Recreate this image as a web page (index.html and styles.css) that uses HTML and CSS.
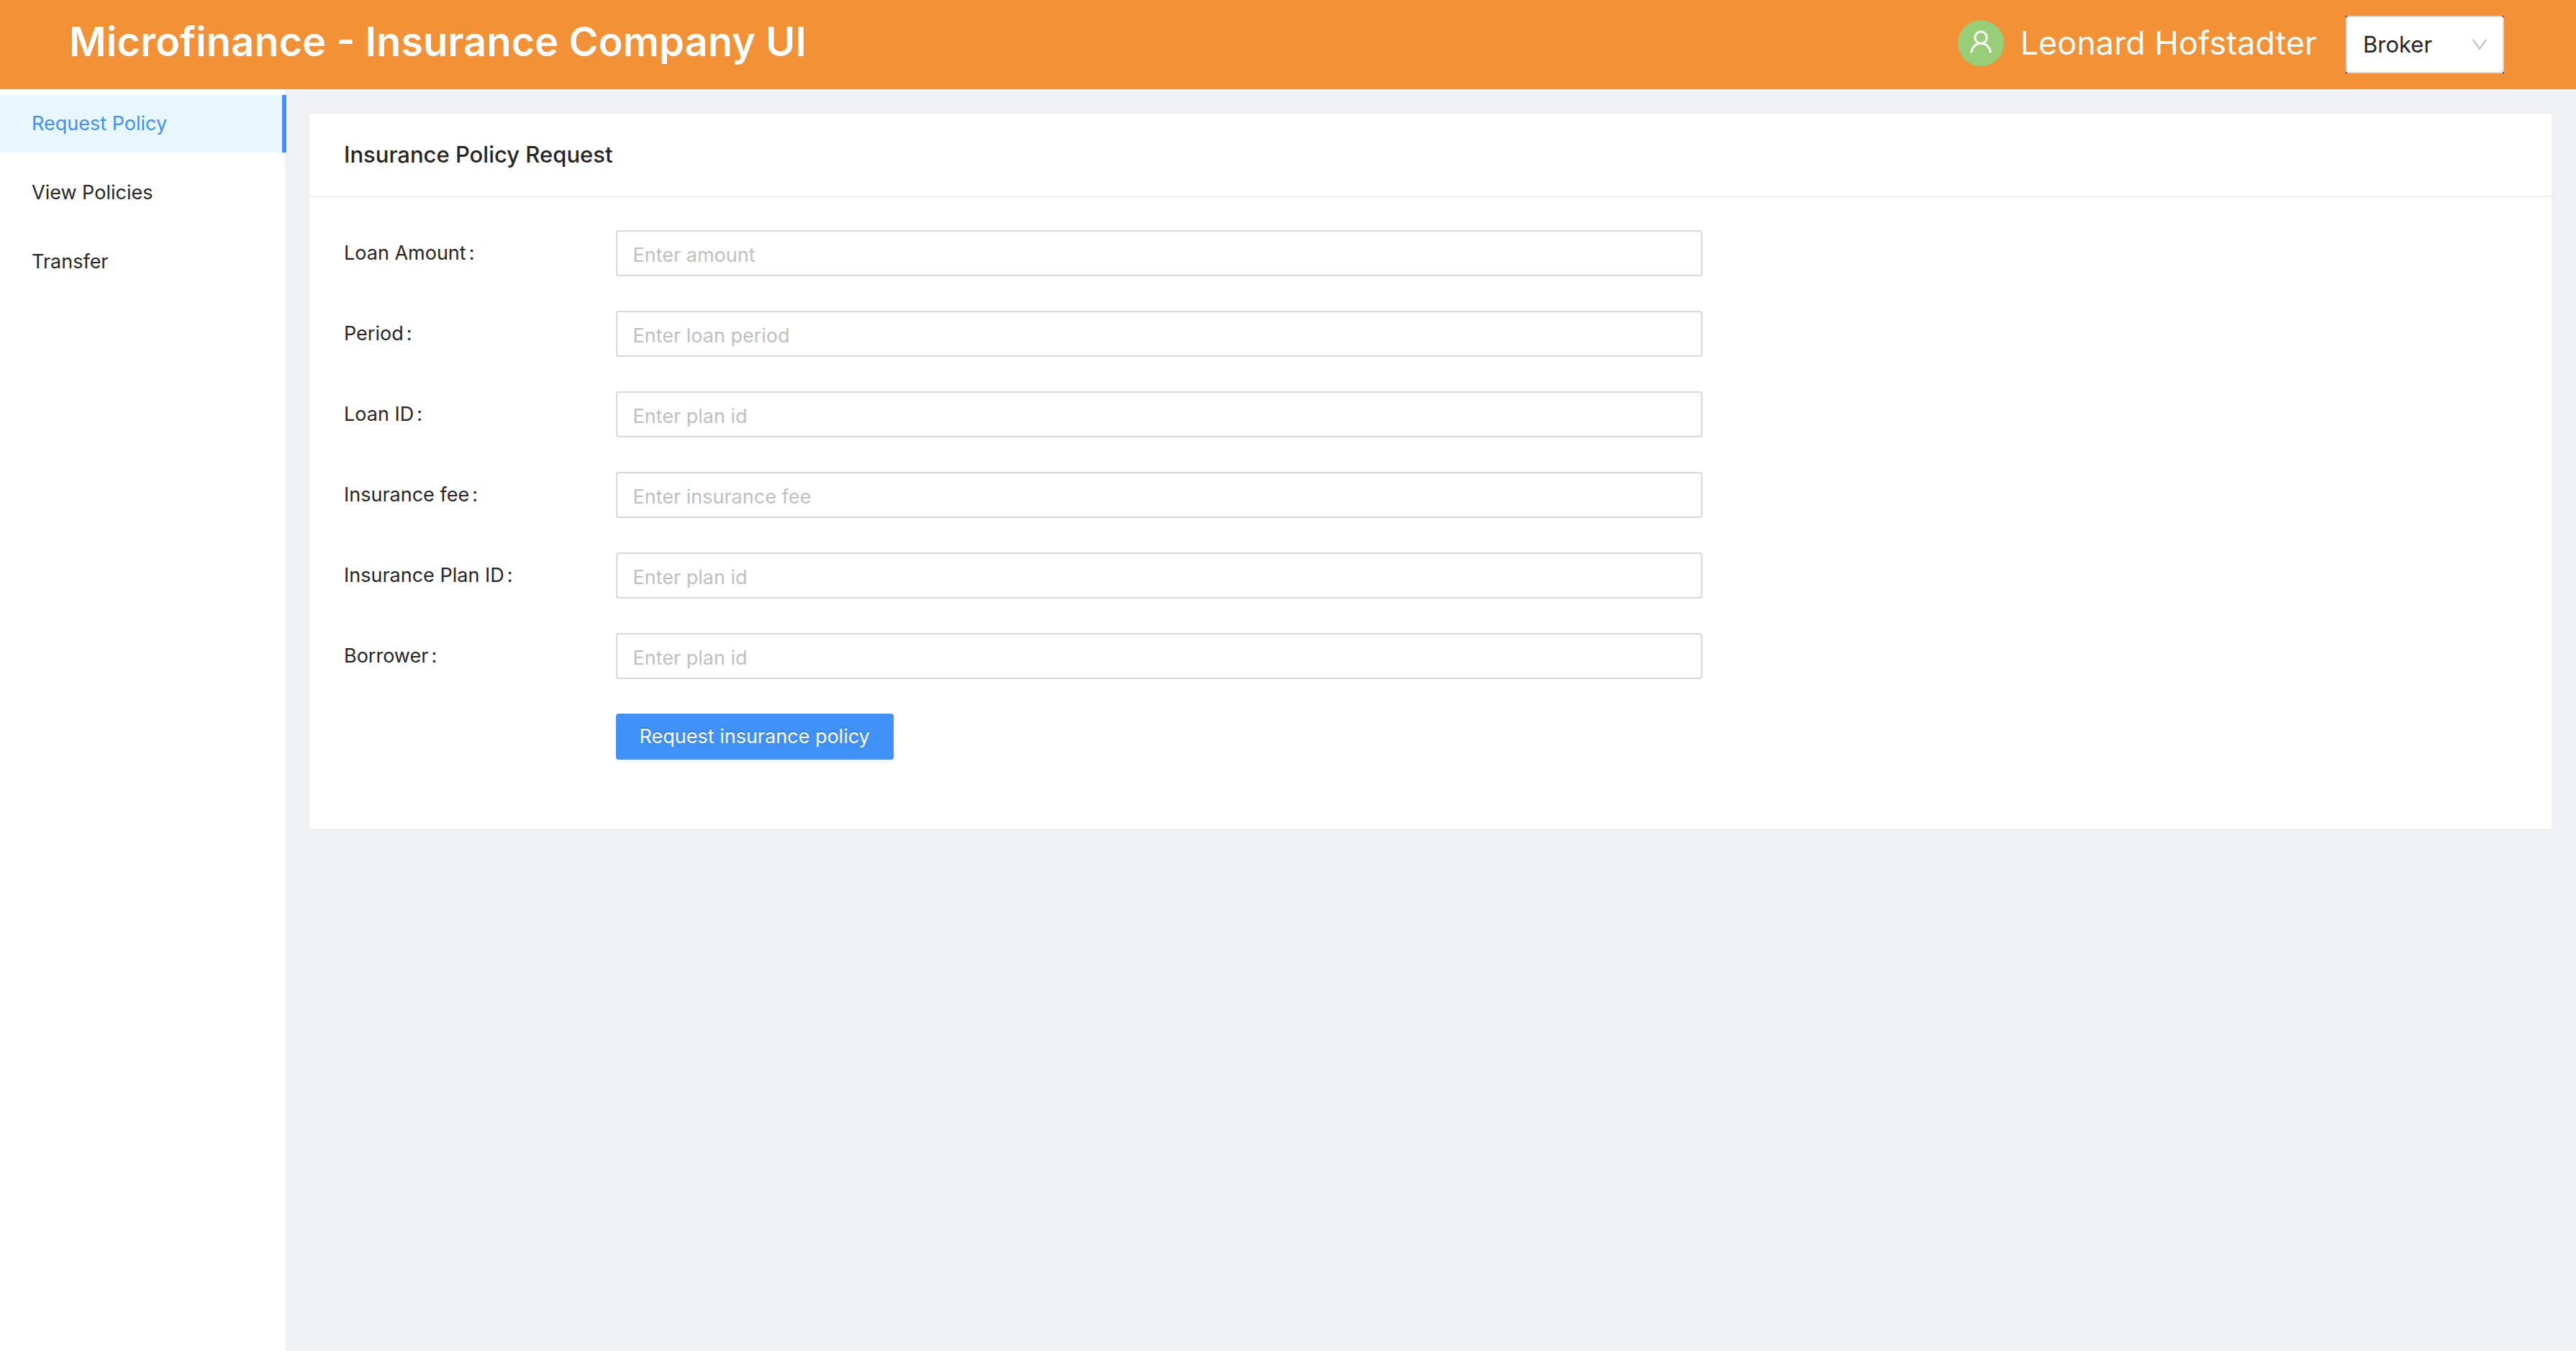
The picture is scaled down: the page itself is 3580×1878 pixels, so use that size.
FILE: index.html
```html
<!DOCTYPE html>
<html lang="en">
<head>
  <meta charset="utf-8">
  <meta name="viewport" content="width=device-width, initial-scale=1">
  <title>Microfinance - Insurance Company UI</title>
  <link rel="stylesheet" href="styles.css">
</head>
<body>
  <header class="header">
    <h1 class="header-title">Microfinance - Insurance Company UI</h1>
    <div class="account">
      <span class="avatar">
        <svg class="avatar-icon" viewBox="0 0 1024 1024" aria-hidden="true"><path d="M858.5 763.6a374 374 0 0 0-80.6-119.5 375.63 375.63 0 0 0-119.5-80.6c-.4-.2-.8-.3-1.2-.5C719.5 518 760 444.7 760 362c0-137-111-248-248-248S264 225 264 362c0 82.7 40.5 156 102.8 201.1-.4.2-.8.3-1.2.5-44.8 18.9-85 46-119.5 80.6a375.63 375.63 0 0 0-80.6 119.5A371.7 371.7 0 0 0 136 901.8a8 8 0 0 0 8 8.2h60c4.4 0 7.9-3.5 8-7.8 2-77.2 33-149.5 87.8-204.3 56.7-56.7 132-87.9 212.2-87.9s155.5 31.2 212.2 87.9C779 752.7 810 825 812 902.2c.1 4.4 3.6 7.8 8 7.8h60a8 8 0 0 0 8-8.2c-1-47.8-10.9-94.3-29.5-138.2zM512 534c-45.9 0-89.1-17.9-121.6-50.4S340 407.9 340 362c0-45.9 17.9-89.1 50.4-121.6S466.1 190 512 190s89.1 17.9 121.6 50.4S684 316.1 684 362c0 45.9-17.9 89.1-50.4 121.6S557.9 534 512 534z"/></svg>
      </span>
      <span class="account-name">Leonard Hofstadter</span>
      <div class="role">
        <select class="role-select" aria-label="Role">
          <option selected>Broker</option>
          <option>Borrower</option>
        </select>
        <svg class="role-arrow" viewBox="0 0 1024 1024" aria-hidden="true"><path d="M884 256h-75c-5.1 0-9.9 2.5-12.9 6.6L512 654.2 227.9 262.6c-3-4.1-7.8-6.6-12.9-6.6h-75c-6.5 0-10.3 7.4-6.5 12.7l352.6 486.1c12.8 17.6 39 17.6 51.7 0l352.6-486.1c3.9-5.3.1-12.7-6.4-12.7z"/></svg>
      </div>
    </div>
  </header>
  <div class="layout">
    <nav class="sidebar">
      <a class="menu-item menu-item-active" href="#request">Request Policy</a>
      <a class="menu-item" href="#policies">View Policies</a>
      <a class="menu-item" href="#transfer">Transfer</a>
    </nav>
    <main class="content">
      <section class="card">
        <h2 class="card-title">Insurance Policy Request</h2>
        <form class="form">
          <div class="form-row">
            <label class="form-label" for="amount">Loan Amount</label>
            <input class="form-input" id="amount" type="text" placeholder="Enter amount">
          </div>
          <div class="form-row">
            <label class="form-label" for="period">Period</label>
            <input class="form-input" id="period" type="text" placeholder="Enter loan period">
          </div>
          <div class="form-row">
            <label class="form-label" for="loan-id">Loan ID</label>
            <input class="form-input" id="loan-id" type="text" placeholder="Enter plan id">
          </div>
          <div class="form-row">
            <label class="form-label" for="fee">Insurance fee</label>
            <input class="form-input" id="fee" type="text" placeholder="Enter insurance fee">
          </div>
          <div class="form-row">
            <label class="form-label" for="plan-id">Insurance Plan ID</label>
            <input class="form-input" id="plan-id" type="text" placeholder="Enter plan id">
          </div>
          <div class="form-row">
            <label class="form-label" for="borrower">Borrower</label>
            <input class="form-input" id="borrower" type="text" placeholder="Enter plan id">
          </div>
          <div class="form-row">
            <button class="form-submit" type="button">Request insurance policy</button>
          </div>
        </form>
      </section>
    </main>
  </div>
</body>
</html>
```
FILE: styles.css
```css
* {
  box-sizing: border-box;
}

body {
  display: flex;
  flex-direction: column;
  min-height: 100vh;
  margin: 0;
  background: #f0f1f5;
  color: #262626;
  font-family: Inter, "Liberation Sans", sans-serif;
  font-size: 27px;
  line-height: 44px;
}

.header {
  display: flex;
  align-items: center;
  justify-content: space-between;
  height: 124px;
  padding: 0 100px 0 96px;
  background: #f29135;
  color: #fff;
}

.header-title {
  margin: 0;
  padding-bottom: 8px;
  font-size: 56px;
  font-weight: 600;
  line-height: 72px;
}

.account {
  display: flex;
  align-items: center;
}

.avatar {
  display: flex;
  align-items: center;
  justify-content: center;
  width: 64px;
  height: 64px;
  margin: 0 22px 4px 0;
  padding-bottom: 4px;
  border-radius: 50%;
  background: #98ce77;
}

.avatar-icon {
  width: 40px;
  height: 40px;
  fill: #fff;
}

.account-name {
  margin: 0 40px 4px 0;
  font-size: 45px;
  line-height: 64px;
}

.role {
  position: relative;
  width: 220px;
  height: 80px;
  background: #000;
}

.role-select {
  width: 100%;
  height: 100%;
  padding: 0 22px;
  border: 2px solid #d9d9d9;
  border-radius: 4px;
  appearance: none;
  background: #fff;
  color: #262626;
  font: inherit;
  font-size: 31px;
}

.role-arrow {
  position: absolute;
  top: 26px;
  right: 20px;
  width: 28px;
  height: 28px;
  fill: #bfbfbf;
  pointer-events: none;
}

.layout {
  display: flex;
  flex: 1;
}

.sidebar {
  flex: none;
  width: 396px;
  padding-top: 8px;
  background: #fff;
}

.menu-item {
  display: block;
  width: 398px;
  margin-bottom: 16px;
  padding: 0 44px;
  color: #262626;
  line-height: 80px;
  text-decoration: none;
}

.menu-item-active {
  border-right: 6px solid #3f90f7;
  background: #e8f6fe;
  color: #3f90f7;
}

.content {
  flex: 1;
  padding: 32px;
}

.card {
  border: 2px solid #f0f0f0;
  border-radius: 4px;
  background: #fff;
}

.card-title {
  margin: 0;
  padding: 32px 48px;
  border-bottom: 2px solid #f0f0f0;
  font-size: 31px;
  font-weight: 500;
  line-height: 50px;
}

.form {
  padding: 46px 48px 48px;
}

.form-row {
  display: grid;
  grid-template-columns: 3fr 12fr 9fr;
  margin-bottom: 48px;
}

.form-label {
  line-height: 64px;
}

.form-label::after {
  content: ":";
  margin-left: 4px;
}

.form-input {
  width: 100%;
  height: 64px;
  padding: 4px 22px 0;
  border: 2px solid #d9d9d9;
  border-radius: 4px;
  background: #fff;
  color: #262626;
  font: inherit;
}

.form-input::placeholder {
  color: #bfbfbf;
}

.form-submit {
  grid-column: 2;
  justify-self: start;
  height: 64px;
  padding: 0 33px;
  border: 0;
  border-radius: 4px;
  background: #3f90f7;
  box-shadow: 0 4px 0 rgba(0, 0, 0, 0.04);
  color: #fff;
  font: inherit;
  text-shadow: 0 -2px 0 rgba(0, 0, 0, 0.12);
}
```
